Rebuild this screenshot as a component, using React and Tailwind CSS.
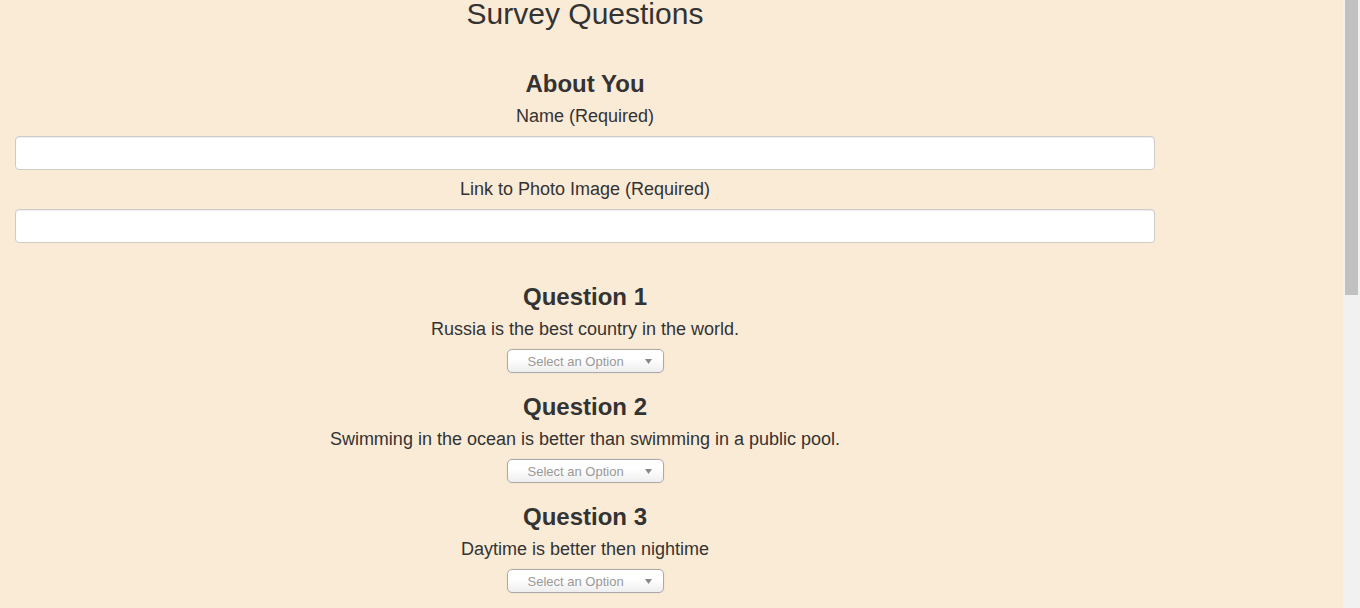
const questions = [
  { title: 'Question 1', text: 'Russia is the best country in the world.' },
  { title: 'Question 2', text: 'Swimming in the ocean is better than swimming in a public pool.' },
  { title: 'Question 3', text: 'Daytime is better then nightime' },
];

function SelectBox() {
  return (
    <div className="mx-auto mt-[8px] flex h-[24px] w-[157px] items-center rounded-[5px] border border-[#aaa] bg-gradient-to-b from-white from-40% to-[#eee] pl-[20px] pr-[11px] text-[13px] text-[#999] shadow-[0_0_2px_rgba(0,0,0,0.08)]">
      <span className="flex-1 text-left leading-none">Select an Option</span>
      <svg width="7" height="5" viewBox="0 0 7 5" className="mt-[1px]">
        <path d="M0 0 L7 0 L3.5 5 Z" fill="#888" />
      </svg>
    </div>
  );
}

function Question({ q, first }) {
  return (
    <div className={first ? 'mt-[41px]' : 'mt-[21px]'}>
      <h3 className="h-[26px] text-[24px] font-bold leading-[26px]">{q.title}</h3>
      <p className="mt-[7px] h-[24px] text-[18px] leading-[24px]">{q.text}</p>
      <SelectBox />
    </div>
  );
}

export default function App() {
  return (
    <div className="flex h-[608px] w-[1360px] overflow-hidden bg-[#faebd7] font-['Liberation_Sans',Arial,sans-serif] text-[#333]">
      <div className="flex-1">
        <div className="w-[1170px] px-[15px] text-center">
          <h2 className="h-[28px] text-[30px] font-normal leading-[28px]">Survey Questions</h2>

          <h3 className="mt-[43px] h-[26px] text-[24px] font-bold leading-[26px]">About You</h3>
          <label className="mt-[7px] block h-[24px] text-[18px] leading-[24px]">Name (Required)</label>
          <input
            type="text"
            className="mt-[8px] block h-[34px] w-full rounded-[4px] border border-[#ccc] bg-white px-3 shadow-[inset_0_1px_1px_rgba(0,0,0,0.075)] outline-none"
          />
          <label className="mt-[7px] block h-[24px] text-[18px] leading-[24px]">Link to Photo Image (Required)</label>
          <input
            type="text"
            className="mt-[8px] block h-[34px] w-full rounded-[4px] border border-[#ccc] bg-white px-3 shadow-[inset_0_1px_1px_rgba(0,0,0,0.075)] outline-none"
          />

          {questions.map((q, i) => (
            <Question key={q.title} q={q} first={i === 0} />
          ))}
        </div>
      </div>
      <div className="w-[17px] bg-[#f1f1f1] px-[2px]">
        <div className="h-[295px] bg-[#c1c1c1]" />
      </div>
    </div>
  );
}
